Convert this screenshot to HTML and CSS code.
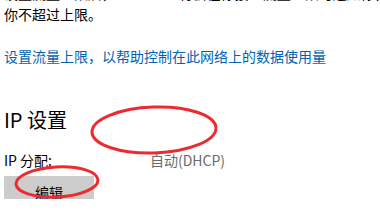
FILE: index.html
```html
<!DOCTYPE html>
<html lang="zh-CN">
<head>
    <meta charset="UTF-8">
    <title>网络设置</title>
    <link rel="stylesheet" href="styles.css">
</head>
<body>
    <div class="page">
        <!-- Data usage -->
        <p class="intro">设置流量上限后，Windows 将会在你接近流量上限时通知你，以帮助你保持<br>你不超过上限。</p>
        <a class="limit-link" href="#">设置流量上限，以帮助控制在此网络上的数据使用量</a>

        <!-- IP settings -->
        <h2>IP 设置</h2>
        <div class="ip-row">
            <span class="ip-label">IP 分配:</span>
            <span class="ip-value">自动(DHCP)</span>
        </div>
        <button class="edit-btn">编辑</button>

        <!-- Red marks drawn over the screenshot -->
        <svg class="marks" width="380" height="216" viewBox="0 0 380 216">
            <ellipse cx="154" cy="147" rx="62" ry="23" transform="rotate(-2 154 147)"/>
            <ellipse cx="57" cy="199" rx="41" ry="15" transform="rotate(-3 57 199)"/>
        </svg>
    </div>
</body>
</html>
```

FILE: styles.css
```css
/* Settings page */
html, body {
    margin: 0;
    padding: 0;
    background: #fff;
    overflow: hidden;
}

body {
    font-family: "Noto Sans CJK SC", "Noto Sans", sans-serif;
    font-size: 14px;
    color: #000;
}

.page {
    position: relative;
    width: 380px;
    height: 216px;
    padding-left: 4px;
    box-sizing: border-box;
}

.intro {
    margin: -17px 0 0;
    line-height: 21px;
    white-space: nowrap;
}

.limit-link {
    display: block;
    margin-top: 22px;
    line-height: 19px;
    color: #0063b1;
    text-decoration: none;
}

h2 {
    margin: 40px 0 0;
    font-size: 20px;
    font-weight: normal;
    line-height: 28px;
}

.ip-row {
    display: grid;
    grid-template-columns: 146px auto;
    margin-top: 17px;
    line-height: 19px;
}

.ip-value {
    color: #6b6b6b;
}

.edit-btn {
    display: block;
    margin-top: 6px;
    width: 90px;
    height: 31px;
    padding: 0;
    border: none;
    background-color: #cccccc;
    font-family: inherit;
    font-size: 14px;
    color: #000;
}

.marks {
    position: absolute;
    left: 0;
    top: 0;
    fill: none;
    stroke: #ec2a30;
    stroke-width: 3;
}
```
